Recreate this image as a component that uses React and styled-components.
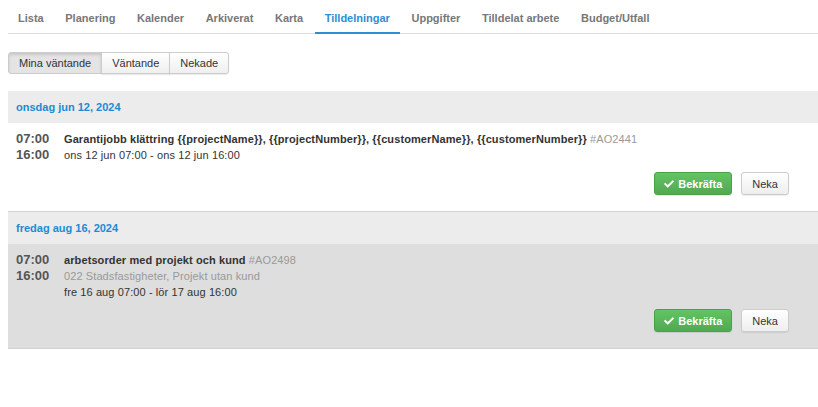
import React from 'react';
import styled, { createGlobalStyle, css } from 'styled-components';
import { FaCheck } from 'react-icons/fa';

const GlobalStyle = createGlobalStyle`
  body {
    margin: 0 0 0 8px;
    font-family: 'Liberation Sans', Arial, sans-serif;
    font-size: 11px;
    color: #333;
    background: #fff;
  }
`;

const Page = styled.div`
  width: 810px;
`;

const Tabs = styled.ul`
  display: flex;
  margin: 0;
  padding: 0;
  list-style: none;
  border-bottom: 1px solid #ddd;
`;

const Tab = styled.li`
  margin-right: 1.6px;
  margin-bottom: -1px;
  padding: 11px 10px 7px;
  line-height: 14px;
  font-weight: bold;
  color: #777;
  border-bottom: 2px solid transparent;

  ${(p) =>
    p.$active &&
    css`
      color: #2b8fd6;
      border-bottom-color: #2b8fd6;
    `}
`;

const FilterGroup = styled.div`
  display: inline-flex;
  margin-top: 18px;
`;

const FilterButton = styled.button`
  height: 22px;
  padding: 0 10px;
  margin-left: -1px;
  font-family: inherit;
  font-size: 11px;
  color: #333;
  border: 1px solid #ccc;
  background: linear-gradient(#fff, #efefef);
  box-shadow: 0 1px 1px rgba(0, 0, 0, 0.08);

  &:first-child {
    margin-left: 0;
    border-radius: 3px 0 0 3px;
  }
  &:last-child {
    border-radius: 0 3px 3px 0;
  }

  ${(p) =>
    p.$active &&
    css`
      background: #e4e4e4;
      box-shadow: inset 0 2px 3px rgba(0, 0, 0, 0.12);
    `}
`;

const DayHeader = styled.div`
  margin-top: ${(p) => (p.$first ? '17px' : '0')};
  height: 32px;
  padding-left: 8px;
  display: flex;
  align-items: center;
  background: #ececec;
  font-weight: bold;
  color: #1b8bd3;
`;

const Item = styled.div`
  padding: 8px 29px 16px 8px;
  background: ${(p) => (p.$highlight ? '#dedede' : '#fff')};
  border-bottom: 1px solid #d2d2d2;
`;

const Row = styled.div`
  display: flex;
`;

const Times = styled.div`
  width: 48px;
  flex: none;
  font-size: 13px;
  line-height: 16px;
  font-weight: bold;
  color: #555;
`;

const Details = styled.div`
  line-height: 16px;
  letter-spacing: 0.1px;
`;

const Title = styled.div`
  font-weight: bold;
  color: #333;
`;

const Muted = styled.span`
  color: #999;
  font-weight: normal;
`;

const Customer = styled.div`
  color: #999;
`;

const Actions = styled.div`
  display: flex;
  justify-content: flex-end;
  gap: 9px;
  margin-top: 9px;
`;

const ActionButton = styled.button`
  height: 23px;
  padding: 0 10px;
  display: inline-flex;
  align-items: center;
  gap: 4px;
  font-family: inherit;
  font-size: 11px;
  border-radius: 3px;
  color: #333;
  border: 1px solid #ccc;
  background: linear-gradient(#fff, #eee);
  box-shadow: 0 1px 1px rgba(0, 0, 0, 0.08);

  ${(p) =>
    p.$primary &&
    css`
      padding: 0 9px;
      color: #fff;
      font-weight: bold;
      border-color: #46a346;
      background: linear-gradient(#62c462, #51a951);
    `}
`;

const items = [
  {
    day: 'onsdag jun 12, 2024',
    start: '07:00',
    end: '16:00',
    title: 'Garantijobb klättring {{projectName}}, {{projectNumber}}, {{customerName}}, {{customerNumber}}',
    code: '#AO2441',
    range: 'ons 12 jun 07:00 - ons 12 jun 16:00',
  },
  {
    day: 'fredag aug 16, 2024',
    start: '07:00',
    end: '16:00',
    title: 'arbetsorder med projekt och kund',
    code: '#AO2498',
    customer: '022 Stadsfastigheter, Projekt utan kund',
    range: 'fre 16 aug 07:00 - lör 17 aug 16:00',
    highlight: true,
  },
];

const tabs = [
  'Lista',
  'Planering',
  'Kalender',
  'Arkiverat',
  'Karta',
  'Tilldelningar',
  'Uppgifter',
  'Tilldelat arbete',
  'Budget/Utfall',
];

const App = () => (
  <Page>
    <GlobalStyle />
    <Tabs>
      {tabs.map((t) => (
        <Tab key={t} $active={t === 'Tilldelningar'}>
          {t}
        </Tab>
      ))}
    </Tabs>

    <FilterGroup>
      <FilterButton $active>Mina väntande</FilterButton>
      <FilterButton>Väntande</FilterButton>
      <FilterButton>Nekade</FilterButton>
    </FilterGroup>

    {items.map((it, i) => (
      <div key={it.code}>
        <DayHeader $first={i === 0}>{it.day}</DayHeader>
        <Item $highlight={it.highlight}>
          <Row>
            <Times>
              <div>{it.start}</div>
              <div>{it.end}</div>
            </Times>
            <Details>
              <Title>
                {it.title} <Muted>{it.code}</Muted>
              </Title>
              {it.customer && <Customer>{it.customer}</Customer>}
              <div>{it.range}</div>
            </Details>
          </Row>
          <Actions>
            <ActionButton $primary>
              <FaCheck size={10} />
              Bekräfta
            </ActionButton>
            <ActionButton>Neka</ActionButton>
          </Actions>
        </Item>
      </div>
    ))}
  </Page>
);

export default App;
